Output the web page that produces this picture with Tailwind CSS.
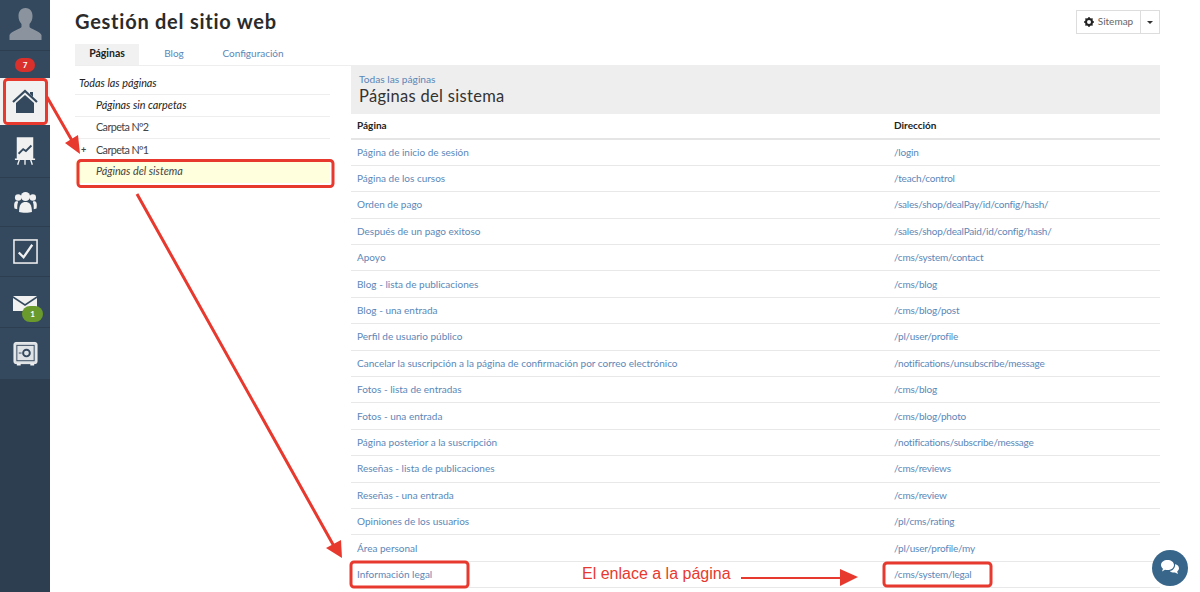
<!DOCTYPE html>
<html lang="es">
<head>
<meta charset="utf-8">
<title>Gestión del sitio web</title>
<script src="https://cdn.jsdelivr.net/npm/@tailwindcss/browser@4"></script>
</head>
<body class="h-[592px] w-[1200px] overflow-hidden bg-white font-['Lato','Liberation_Sans',sans-serif] text-[10px] text-[#333]">
<div class="relative flex h-[592px]">
  <!-- sidebar -->
  <aside class="flex w-[50px] shrink-0 flex-col bg-[#2c3e50]">
    <div class="flex h-[51px] items-end justify-center border-b border-[#2c3e50] bg-[#34495e] pb-[10px]">
      <svg width="33" height="32" viewBox="0 0 32 32" fill="#8b949e"><path d="M16 0c-5 0-7 4-7 8 0 3 1 6 3 8v3c-1 2-10 4-12 8v5h32v-5c-2-4-11-6-12-8v-3c2-2 3-5 3-8 0-4-2-8-7-8z"/></svg>
    </div>
    <div class="flex h-[27px] items-center justify-center bg-[#34495e]">
      <span class="h-[14px] w-[20px] rounded-full bg-[#d9302c] text-center text-[8px] leading-[14px] font-bold text-white">7</span>
    </div>
    <div class="flex h-[47px] items-center justify-center bg-[#f1f1f1]">
      <svg width="26" height="26" viewBox="0 0 26 26"><path d="M1 13 13 2l12 11" fill="none" stroke="#34495e" stroke-width="2.200"/><path d="M4 14 13 6l9 8v10H4z" fill="#34495e"/><path d="M18 3h3v5l-3-3z" fill="#34495e"/></svg>
    </div>
    <div class="flex h-[53px] items-center justify-center border-b border-[#2c3e50] bg-[#34495e]">
      <svg width="22" height="30" viewBox="0 0 24 32"><path d="M3 1h18v24H3z" fill="#f1f1f1"/><path d="M5 19l5-5 3 2 6-6" fill="none" stroke="#34495e" stroke-width="2"/><path d="M1 25h22M6 25l-2 6M18 25l2 6M12 25v6" stroke="#f1f1f1" stroke-width="1.500"/></svg>
    </div>
    <div class="flex h-[49px] items-center justify-center border-b border-[#2c3e50] bg-[#34495e]">
      <svg width="25" height="22" viewBox="0 0 26 24" fill="#f1f1f1"><circle cx="13" cy="6" r="5"/><circle cx="5" cy="7" r="3.500"/><circle cx="21" cy="7" r="3.500"/><path d="M6 23c0-9 3-11 7-11s7 2 7 11c-3 1-11 1-14 0z"/><path d="M1 19c-1-5 0-8 3-8l1 1c-1 2-1 5-1 8zM25 19c1-5 0-8-3-8l-1 1c1 2 1 5 1 8z"/></svg>
    </div>
    <div class="flex h-[50px] items-center justify-center border-b border-[#2c3e50] bg-[#34495e]">
      <svg width="25" height="25" viewBox="0 0 26 26"><rect x="1" y="1" width="24" height="24" fill="none" stroke="#f1f1f1" stroke-width="1.600"/><path d="M6 14l5 5 9-13" fill="none" stroke="#f1f1f1" stroke-width="2.400"/></svg>
    </div>
    <div class="relative flex h-[51px] items-center justify-center border-b border-[#2c3e50] bg-[#34495e]">
      <svg width="24" height="16" viewBox="0 0 24 16" class="translate-y-[1px]" fill="#f1f1f1"><path d="M0 1h24L12 9z"/><path d="M0 3v13h24V3L12 11z"/></svg>
      <span class="absolute top-[29px] left-[22px] h-[16px] w-[21px] rounded-full bg-[#6a9a2b] text-center text-[8px] leading-[16px] font-bold text-white">1</span>
    </div>
    <div class="flex h-[51px] items-center justify-center bg-[#34495e]">
      <svg width="25" height="26" viewBox="0 0 26 26"><rect x="1" y="1" width="24" height="22" rx="2" fill="#dfe3e6" stroke="#f1f1f1"/><rect x="4" y="4" width="18" height="16" fill="none" stroke="#34495e"/><circle cx="14" cy="12" r="3.500" fill="none" stroke="#34495e" stroke-width="2"/><path d="M6 12h3" stroke="#34495e"/><path d="M4 23h4v2H4zM18 23h4v2h-4z" fill="#f1f1f1"/></svg>
    </div>
  </aside>

  <!-- content -->
  <main class="min-w-0 flex-1 pr-10 pl-[25px]">
    <header class="flex h-[44px] items-start justify-between pt-[9px]">
      <h1 class="text-[20px] leading-6 font-bold tracking-[0.75px] text-[#2b2b2b]">Gestión del sitio web</h1>
      <div class="mt-[1px] flex h-6 border border-[#ddd] text-[10px] text-[#666]">
        <span class="flex w-[64px] items-center justify-center gap-1 border-r border-[#ddd] pb-[1px]">
          <svg width="10" height="10" viewBox="0 0 10 10"><circle cx="5" cy="5" r="3" fill="none" stroke="#222" stroke-width="2"/><path d="M5 0v2M5 8v2M0 5h2M8 5h2M1.500 1.500l1.400 1.400M7.100 7.100l1.400 1.400M1.500 8.500l1.400-1.400M7.100 2.900l1.400-1.400" stroke="#222" stroke-width="1.400"/></svg>
          Sitemap
        </span>
        <span class="flex w-[18px] items-center justify-center">
          <span class="border-x-[3px] border-t-[3px] border-x-transparent border-t-[#333]"></span>
        </span>
      </div>
    </header>

    <nav class="flex h-[22px] border-b border-[#eee] pb-0 text-[#5b87b8]">
      <span class="flex w-[64px] items-center justify-center bg-[#f1f1f1] pb-[2px] text-[10.500px] font-bold text-[#222]">Páginas</span>
      <span class="flex w-[70px] items-center justify-center pb-[2px]">Blog</span>
      <span class="flex w-[88px] items-center justify-center pb-[2px]">Configuración</span>
    </nav>

    <div class="flex gap-[21px]">
      <!-- folder tree -->
      <ul class="w-[255px] shrink-0 text-[10.800px] text-[#444]">
        <li class="flex h-[29px] items-center border-b border-[#eee] pt-[6px] pl-1 text-[#222] italic">Todas las páginas</li>
        <li class="flex h-[22px] items-center border-b border-[#eee] pl-[21px] text-[#222] italic">Páginas sin carpetas</li>
        <li class="flex h-[22px] items-center border-b border-[#eee] pl-[21px] tracking-[-0.6px]">Carpeta Nº2</li>
        <li class="relative flex h-[22px] items-center pl-[21px] tracking-[-0.6px]"><span class="absolute left-[6px] text-[9px] font-bold">+</span>Carpeta Nº1</li>
        <li class="flex h-[22px] items-center bg-[#ffffdd] pb-[2px] pl-[21px] text-[#444] italic">Páginas del sistema</li>
      </ul>

      <!-- system pages -->
      <section class="min-w-0 flex-1">
        <div class="h-[48px] bg-[#eee] px-2 pt-[7px]">
          <div class="text-[10.200px] leading-3 text-[#5b87b8]">Todas las páginas</div>
          <h2 class="-mt-[1px] text-[16.500px] leading-6 tracking-[0.3px] text-[#333]">Páginas del sistema</h2>
        </div>
        <table class="w-full table-fixed border-collapse text-[#5b87b8]">
          <thead>
            <tr class="h-[25px] border-b-2 border-[#e5e5e5] text-left text-[#222]">
              <th class="w-[543px] pb-[2px] pl-[6px] font-bold">Página</th>
              <th class="pb-[2px] font-bold">Dirección</th>
            </tr>
          </thead>
          <tbody class="[&_td:first-child]:pl-[6px] [&_td:last-child]:tracking-[-0.2px] [&_tr]:h-[26.400px] [&_tr]:border-b [&_tr]:border-[#e8e8e8]">
            <tr><td>Página de inicio de sesión</td><td>/login</td></tr>
            <tr><td>Página de los cursos</td><td>/teach/control</td></tr>
            <tr><td>Orden de pago</td><td>/sales/shop/dealPay/id/config/hash/</td></tr>
            <tr><td>Después de un pago exitoso</td><td>/sales/shop/dealPaid/id/config/hash/</td></tr>
            <tr><td>Apoyo</td><td>/cms/system/contact</td></tr>
            <tr class="border-b-2"><td>Blog - lista de publicaciones</td><td>/cms/blog</td></tr>
            <tr><td>Blog - una entrada</td><td>/cms/blog/post</td></tr>
            <tr><td>Perfil de usuario público</td><td>/pl/user/profile</td></tr>
            <tr><td>Cancelar la suscripción a la página de confirmación por correo electrónico</td><td>/notifications/unsubscribe/message</td></tr>
            <tr><td>Fotos - lista de entradas</td><td>/cms/blog</td></tr>
            <tr><td>Fotos - una entrada</td><td>/cms/blog/photo</td></tr>
            <tr><td>Página posterior a la suscripción</td><td>/notifications/subscribe/message</td></tr>
            <tr><td>Reseñas - lista de publicaciones</td><td>/cms/reviews</td></tr>
            <tr class="border-b-2"><td>Reseñas - una entrada</td><td>/cms/review</td></tr>
            <tr><td>Opiniones de los usuarios</td><td>/pl/cms/rating</td></tr>
            <tr><td>Área personal</td><td>/pl/user/profile/my</td></tr>
            <tr><td>Información legal</td><td>/cms/system/legal</td></tr>
          </tbody>
        </table>
      </section>
    </div>
  </main>

  <!-- annotations drawn over the page -->
  <svg class="absolute inset-0" width="1200" height="592" viewBox="0 0 1200 592" fill="none">
    <g stroke="#e8392e" stroke-width="3">
      <rect x="4.500" y="79.500" width="42" height="44" rx="3"/>
      <rect x="78" y="160.500" width="255" height="26" rx="3"/>
      <rect x="351" y="562" width="117" height="25" rx="3"/>
      <rect x="884" y="563" width="107" height="23" rx="3"/>
      <path d="M47 97 74 144M137 194 335 548"/>
      <path d="M740 578H842" stroke-width="2"/>
    </g>
    <g fill="#e8392e">
      <path d="M65 143 80 154 78 135z"/>
      <path d="M326 548 342 558 341 540z"/>
      <path d="M840 569 858 577 840 586z"/>
    </g>
  </svg>
  <span class="absolute top-[564px] left-[572px] bg-white px-[10px] font-['Liberation_Sans',sans-serif] text-[16px] leading-5 text-[#e8392e]">El enlace a la página</span>

  <button class="absolute top-[550px] left-[1152px] flex h-9 w-9 items-center justify-center rounded-full bg-[#38658a]">
    <svg width="20" height="18" viewBox="0 0 20 18" fill="#fff"><path d="M1 6c0-3 3-5 6.500-5S14 3 14 6s-3 5-6.500 5c-1 0-1.500 0-2.500-.3L2 12.500l1-2.800C1.800 8.700 1 7.500 1 6z"/><path d="M15.200 5c2 .7 3.800 2.200 3.800 4.300 0 1.400-.8 2.500-1.800 3.200l.8 2.500-3-1.500c-2 .3-4-.3-5.200-1.500 3 0 5.700-3.500 5.400-7z"/></svg>
  </button>
</div>
</body>
</html>
